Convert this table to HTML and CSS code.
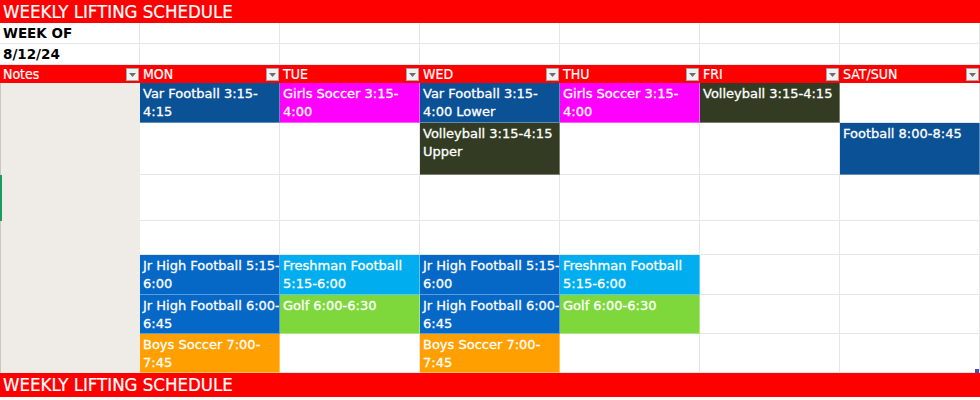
FILE: index.html
```html
<!DOCTYPE html>
<html>
<head>
<meta charset="utf-8">
<link rel="stylesheet" href="styles.css">
</head>
<body>
<div class="sheet">
  <div class="title span-all">WEEKLY LIFTING SCHEDULE</div>

  <div class="cell bold">WEEK OF</div>
  <div class="cell"></div><div class="cell"></div><div class="cell"></div><div class="cell"></div><div class="cell"></div><div class="cell"></div>

  <div class="cell bold">8/12/24</div>
  <div class="cell"></div><div class="cell"></div><div class="cell"></div><div class="cell"></div><div class="cell"></div><div class="cell"></div>

  <div class="head">Notes<span class="filter"><svg viewBox="0 0 13 13" width="13" height="13"><rect x="0.5" y="0.5" width="12" height="12" fill="#f2f2f2" stroke="#a6a6a6"/><path d="M3 5h7l-3.5 4z" fill="#6e6e6e"/></svg></span></div>
  <div class="head">MON<span class="filter"><svg viewBox="0 0 13 13" width="13" height="13"><rect x="0.5" y="0.5" width="12" height="12" fill="#f2f2f2" stroke="#a6a6a6"/><path d="M3 5h7l-3.5 4z" fill="#6e6e6e"/></svg></span></div>
  <div class="head">TUE<span class="filter"><svg viewBox="0 0 13 13" width="13" height="13"><rect x="0.5" y="0.5" width="12" height="12" fill="#f2f2f2" stroke="#a6a6a6"/><path d="M3 5h7l-3.5 4z" fill="#6e6e6e"/></svg></span></div>
  <div class="head">WED<span class="filter"><svg viewBox="0 0 13 13" width="13" height="13"><rect x="0.5" y="0.5" width="12" height="12" fill="#f2f2f2" stroke="#a6a6a6"/><path d="M3 5h7l-3.5 4z" fill="#6e6e6e"/></svg></span></div>
  <div class="head">THU<span class="filter"><svg viewBox="0 0 13 13" width="13" height="13"><rect x="0.5" y="0.5" width="12" height="12" fill="#f2f2f2" stroke="#a6a6a6"/><path d="M3 5h7l-3.5 4z" fill="#6e6e6e"/></svg></span></div>
  <div class="head">FRI<span class="filter"><svg viewBox="0 0 13 13" width="13" height="13"><rect x="0.5" y="0.5" width="12" height="12" fill="#f2f2f2" stroke="#a6a6a6"/><path d="M3 5h7l-3.5 4z" fill="#6e6e6e"/></svg></span></div>
  <div class="head">SAT/SUN<span class="filter"><svg viewBox="0 0 13 13" width="13" height="13"><rect x="0.5" y="0.5" width="12" height="12" fill="#f2f2f2" stroke="#a6a6a6"/><path d="M3 5h7l-3.5 4z" fill="#6e6e6e"/></svg></span></div>

  <!-- row 1 -->
  <div class="notes"></div>
  <div class="cell ev navy">Var Football 3:15-<br>4:15</div>
  <div class="cell ev magenta">Girls Soccer 3:15-<br>4:00</div>
  <div class="cell ev navy">Var Football 3:15-<br>4:00 Lower</div>
  <div class="cell ev magenta">Girls Soccer 3:15-<br>4:00</div>
  <div class="cell ev olive">Volleyball 3:15-4:15</div>
  <div class="cell"></div>

  <!-- row 2 -->
  <div class="cell"></div>
  <div class="cell"></div>
  <div class="cell ev olive">Volleyball 3:15-4:15<br>Upper</div>
  <div class="cell"></div>
  <div class="cell"></div>
  <div class="cell ev navy">Football 8:00-8:45</div>

  <!-- row 3 -->
  <div class="cell"></div><div class="cell"></div><div class="cell"></div><div class="cell"></div><div class="cell"></div><div class="cell"></div>

  <!-- row 4 -->
  <div class="cell"></div><div class="cell"></div><div class="cell"></div><div class="cell"></div><div class="cell"></div><div class="cell"></div>

  <!-- row 5 -->
  <div class="cell ev blue">Jr High Football 5:15-<br>6:00</div>
  <div class="cell ev sky">Freshman Football<br>5:15-6:00</div>
  <div class="cell ev blue">Jr High Football 5:15-<br>6:00</div>
  <div class="cell ev sky">Freshman Football<br>5:15-6:00</div>
  <div class="cell"></div>
  <div class="cell"></div>

  <!-- row 6 -->
  <div class="cell ev blue">Jr High Football 6:00-<br>6:45</div>
  <div class="cell ev green">Golf 6:00-6:30</div>
  <div class="cell ev blue">Jr High Football 6:00-<br>6:45</div>
  <div class="cell ev green">Golf 6:00-6:30</div>
  <div class="cell"></div>
  <div class="cell"></div>

  <!-- row 7 -->
  <div class="cell ev orange">Boys Soccer 7:00-<br>7:45</div>
  <div class="cell"></div>
  <div class="cell ev orange">Boys Soccer 7:00-<br>7:45</div>
  <div class="cell"></div>
  <div class="cell"></div>
  <div class="cell"></div>

  <div class="title span-all bottom">WEEKLY LIFTING SCHEDULE</div>

  <span class="row-mark"></span>
  <span class="handle"></span>
</div>
</body>
</html>
```

FILE: styles.css
```css
html, body {
  margin: 0;
  padding: 0;
  background: #ffffff;
}

.sheet {
  position: relative;
  display: grid;
  grid-template-columns: repeat(7, 140px);
  grid-template-rows: 23px 21px 21px 18px 40px 52px 46px 34px 40px 39px 39px 24px;
  width: 980px;
  height: 400px;
  font-family: "DejaVu Sans", sans-serif;
  font-size: 13px;
  line-height: 18px;
  overflow: hidden;
}

.span-all {
  grid-column: 1 / -1;
}

.title {
  background: #ff0000;
  color: #ffffff;
  font-family: "DejaVu Sans Condensed", "DejaVu Sans", sans-serif;
  font-size: 18.5px;
  line-height: 23px;
  padding-left: 3px;
  white-space: nowrap;
  -webkit-text-stroke: 0.2px #ffffff;
}

.title.bottom {
  line-height: 24px;
}

.cell {
  box-sizing: border-box;
  border-right: 1px solid #e6e6e6;
  border-bottom: 1px solid #e6e6e6;
  padding: 2px 3px 0 3px;
  white-space: nowrap;
  overflow: hidden;
  color: #000000;
  line-height: 17.5px;
}

.bold {
  font-weight: bold;
  font-size: 13.5px;
  line-height: 19px;
  padding-top: 1px;
}

.head {
  display: flex;
  align-items: center;
  justify-content: space-between;
  background: #ff0000;
  color: #ffffff;
  font-family: "DejaVu Sans Condensed", "DejaVu Sans", sans-serif;
  font-size: 14px;
  padding: 0 1px 0 3px;
  white-space: nowrap;
  -webkit-text-stroke: 0.2px #ffffff;
}

.filter {
  display: flex;
}

.notes {
  grid-row: span 7;
  background: #efebe6;
  border-left: 1px solid #c8c8c8;
}

.ev {
  color: #ffffff;
  border-color: rgba(255, 255, 255, 0.35);
  -webkit-text-stroke: 0.3px #ffffff;
}

.navy { background: #0b5196; }
.magenta { background: #ff00ff; }
.olive { background: #333c23; }
.blue { background: #0567c6; }
.sky { background: #00aeef; }
.green { background: #7ed83c; }
.orange { background: #ffa000; }

.row-mark {
  position: absolute;
  left: 0;
  top: 175px;
  width: 2px;
  height: 46px;
  background: #1e9a5c;
}

.handle {
  position: absolute;
  left: 975px;
  top: 369px;
  width: 4px;
  height: 4px;
  background: #3f4fc0;
}
```
